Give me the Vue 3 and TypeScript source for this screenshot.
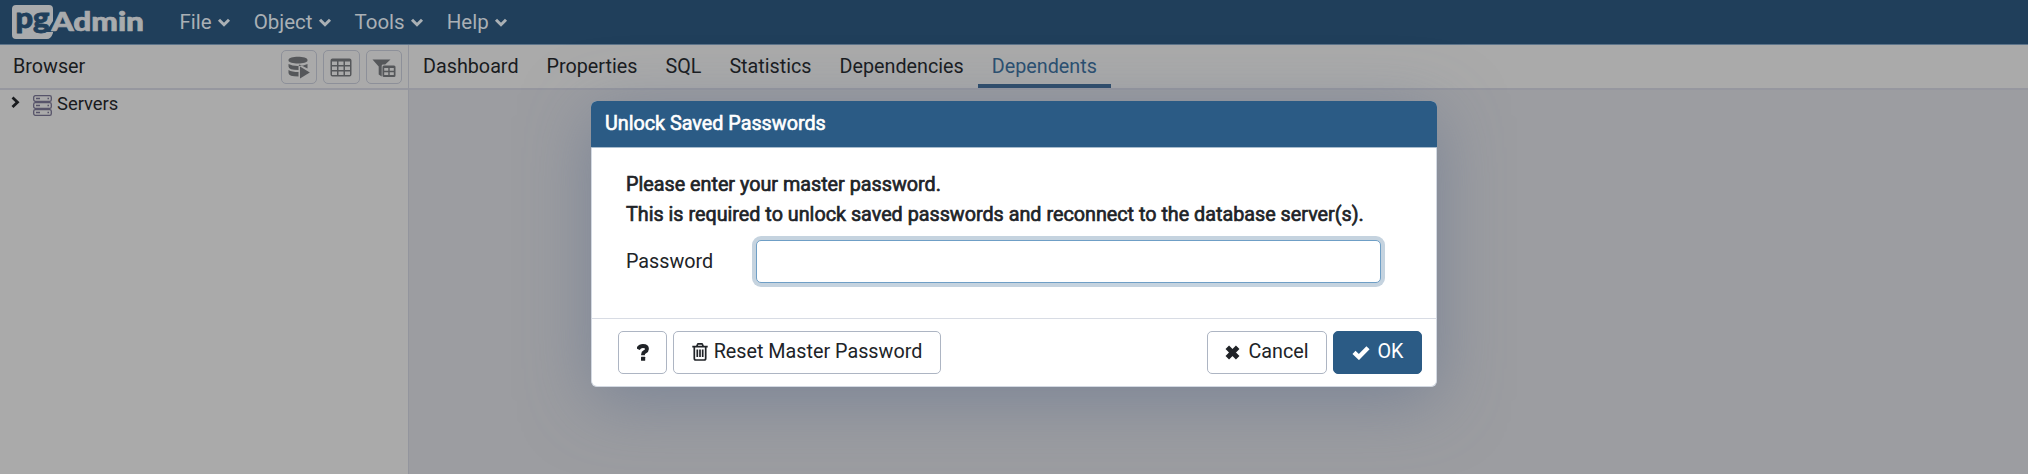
<script setup lang="ts">
const menus: string[] = ['File', 'Object', 'Tools', 'Help']
const tabs: string[] = ['Dashboard', 'Properties', 'SQL', 'Statistics', 'Dependencies', 'Dependents']
const activeTab = 'Dependents'
</script>

<template>
  <div class="app">
    <header class="navbar">
      <svg class="logo" width="138" height="40" viewBox="0 0 138 40">
        <path class="light" d="M6 1H39Q43 1 43 5V17L36 28H43V29Q41 35 37 35H6Q2 35 2 31V5Q2 1 6 1Z" />
        <text class="pg" x="5.500" y="23.500" textLength="34" lengthAdjust="spacingAndGlyphs">pg</text>
        <text class="admin" x="41.500" y="27" textLength="92.500" lengthAdjust="spacingAndGlyphs">Admin</text>
      </svg>
      <nav class="menus">
        <div v-for="menu in menus" :key="menu" class="menu">
          <span>{{ menu }}</span>
          <svg width="14" height="10" viewBox="0 0 14 10"><path d="M2 1.700L7 6.700L12 1.700" /></svg>
        </div>
      </nav>
    </header>

    <div class="workspace">
      <aside class="browser">
        <div class="browser-head">
          <span class="browser-title">Browser</span>
          <div class="tools">
            <div class="tool">
              <svg width="22" height="23" viewBox="0 0 22 23">
                <path d="M.5 4C.5-.2 19.500-.2 19.500 4V4.500C19.500 8.500 .5 8.500 .5 4.500Z" />
                <path d="M.5 8Q4 10 10 10T19.500 8V12.500L11.500 8.500L10.500 10V14Q.5 14 .5 10.500Z" />
                <path d="M.5 14Q4 16 10.500 16V20.500Q.5 20.500 .5 17Z" />
                <path d="M12 10.500L21.800 16.500L12 22.500Z" />
              </svg>
            </div>
            <div class="tool">
              <svg width="22" height="19" viewBox="0 0 22 19">
                <path fill-rule="evenodd" d="M2.500 .5H19.500Q21.500 .5 21.500 2.500V16.500Q21.500 18.500 19.500 18.500H2.500Q.5 18.500 .5 16.500V2.500Q.5 .5 2.500 .5ZM2 3.500V7H7V3.500ZM8.500 3.500V7H13.500V3.500ZM15 3.500V7H20V3.500ZM2 8.500V12H7V8.500ZM8.500 8.500V12H13.500V8.500ZM15 8.500V12H20V8.500ZM2 13.500V17H7V13.500ZM8.500 13.500V17H13.500V13.500ZM15 13.500V17H20V13.500Z" />
              </svg>
            </div>
            <div class="tool">
              <svg class="filter" width="24" height="19" viewBox="0 0 24 19">
                <path d="M.5 .5H18.500L13.200 5.500H10.500L9.700 6.500V17.500L6.700 15.500V7.500Z" />
                <path fill-rule="evenodd" d="M12 6.500H22Q23.500 6.500 23.500 8V16.500Q23.500 18 22 18H12Q10.500 18 10.500 16.500V8Q10.500 6.500 12 6.500ZM12.200 9V11.700H16.300V9ZM17.700 9V11.700H21.800V9ZM12.200 13.200V16H16.300V13.200ZM17.700 13.200V16H21.800V13.200Z" />
              </svg>
            </div>
          </div>
        </div>
        <div class="tree-row">
          <svg class="caret" width="9" height="13" viewBox="0 0 9 13"><path d="M1.500 1.500L6.500 6.200L1.500 11" /></svg>
          <svg class="servers" width="19" height="21" viewBox="0 0 19 21">
            <rect x=".7" y=".7" width="17.600" height="5.600" rx="1.600" />
            <rect x=".7" y="7.700" width="17.600" height="5.600" rx="1.600" />
            <rect x=".7" y="14.700" width="17.600" height="5.600" rx="1.600" />
            <path d="M3 3.500H7M3 10.500H7M3 17.500H7M14.500 3.500H16M14.500 10.500H16M14.500 17.500H16" />
          </svg>
          <span>Servers</span>
        </div>
      </aside>

      <main class="content">
        <div class="tabs">
          <div v-for="tab in tabs" :key="tab" class="tab" :class="{ active: tab === activeTab }">{{ tab }}</div>
        </div>
      </main>
    </div>

    <section class="dialog">
      <div class="dialog-head">Unlock Saved Passwords</div>
      <div class="dialog-body">
        <p class="message">Please enter your master password.<br />This is required to unlock saved passwords and reconnect to the database server(s).</p>
        <div class="field">
          <label for="password">Password</label>
          <input id="password" type="password" />
        </div>
      </div>
      <div class="dialog-foot">
        <button class="btn help">
          <svg width="12" height="17" viewBox="0 0 12 17">
            <path class="hook" d="M1 5.200Q2.500 2 5.900 2Q10 2 10 5Q10 6.700 7.900 7.800Q6 8.800 6 10.500V11.300" />
            <rect x="4" y="12.700" width="4.200" height="4.100" rx=".5" />
          </svg>
        </button>
        <button class="btn reset">
          <svg width="16" height="18" viewBox="0 0 16 18">
            <path class="line" d="M.3 3.700H15.700M4.700 3.500L5.600 1.200Q5.700 .9 6.200 .9H9.800Q10.300 .9 10.400 1.200L11.300 3.500M2.300 4V15.200Q2.300 17 3.800 17H12.200Q13.700 17 13.700 15.200V4M5.300 6.500V14M8 6.500V14M10.700 6.500V14" />
          </svg>
          <span>Reset Master Password</span>
        </button>
        <button class="btn cancel">
          <svg width="15" height="15" viewBox="0 0 15 15"><path class="cross" d="M2.300 2.300L12.700 12.700M12.700 2.300L2.300 12.700" /></svg>
          <span>Cancel</span>
        </button>
        <button class="btn ok">
          <svg width="18" height="15" viewBox="0 0 18 15"><path class="check" d="M2 7.300L6.900 12L16 2.700" /></svg>
          <span>OK</span>
        </button>
      </div>
    </section>
  </div>
</template>

<style>
body {
  margin: 0;
  overflow: hidden;
}
</style>

<style scoped>
* {
  box-sizing: border-box;
}
.app {
  position: relative;
  display: flex;
  flex-direction: column;
  width: 2028px;
  height: 474px;
  overflow: hidden;
  background: #aaa;
  color: #191b1e;
  font: 19.750px/30px Roboto, sans-serif;
}
svg {
  display: block;
  flex: none;
}
.navbar {
  display: flex;
  height: 45px;
  flex: none;
  background: #203f5b;
  border-bottom: 1px solid #5d748a;
  color: #aab0b5;
  font-size: 20.500px;
}
.logo {
  margin: 4px 0 0 10px;
  overflow: visible;
}
.light {
  fill: #a9abad;
}
.pg,
.admin {
  font: 900 29px/30px Lato, sans-serif;
}
.pg {
  fill: #203f5b;
  stroke: #203f5b;
  stroke-width: .8px;
}
.admin {
  fill: #a9abad;
  stroke: #a9abad;
  stroke-width: .7px;
  font-size: 26.500px;
}
.menus {
  display: flex;
  gap: 23px;
  margin: 7px 0 0 31.500px;
}
.menu {
  display: flex;
  gap: 5px;
}
.menu svg {
  margin-top: 11px;
}
.menu path {
  fill: none;
  stroke: #aab0b5;
  stroke-width: 3;
}
.workspace {
  display: flex;
  flex: 1;
}
.browser {
  width: 409px;
  border-right: 1px solid #93959d;
}
.browser-head {
  display: flex;
  justify-content: space-between;
  height: 45px;
  padding: 5px 6px 0 13px;
  border-bottom: 2px solid #96979f;
}
.browser-title {
  margin-top: 2px;
}
.tools {
  display: flex;
  gap: 6px;
}
.tool {
  display: flex;
  align-items: center;
  justify-content: center;
  width: 36.500px;
  height: 34px;
  border: 1px solid #8d9099;
  border-radius: 5px;
}
.tool svg {
  fill: #55575a;
}
.tool .filter {
  margin-top: 3px;
}
.tree-row {
  display: flex;
  height: 30px;
  padding-left: 10.500px;
  font-size: 18.400px;
}
.tree-row span {
  margin-top: -1px;
}
.caret {
  margin-top: 6px;
}
.caret path {
  fill: none;
  stroke: #191b1e;
  stroke-width: 2.800;
}
.servers {
  margin: 5px 5px 0 13.500px;
}
.servers rect,
.servers path {
  fill: none;
  stroke: #57546a;
  stroke-width: 1.300;
}
.content {
  flex: 1;
  background: #9c9da1;
}
.tabs {
  display: flex;
  height: 45px;
  background: #aaa;
  border-bottom: 2px solid #96979f;
}
.tab {
  height: 43px;
  padding: 7px 14px 0;
  border-bottom: 4px solid transparent;
}
.tab.active {
  color: #2b4f70;
  border-bottom-color: #2b4a69;
}
.dialog {
  position: absolute;
  left: 591px;
  top: 101px;
  display: flex;
  flex-direction: column;
  width: 846px;
  height: 286px;
  border: 1px solid #d3d9e2;
  border-top: 0;
  border-radius: 6px;
  background: #fff;
  color: #202327;
  box-shadow: 0 14px 67px rgba(90, 108, 140, .5);
}
.dialog-head {
  height: 47px;
  margin: 0 -1px;
  padding: 8px 14px;
  border-bottom: 1px solid #a9bccd;
  border-radius: 6px 6px 0 0;
  background: #2b5b85;
  color: #fff;
  -webkit-text-stroke: .6px #fff;
}
.dialog-body {
  height: 170px;
  padding: 22px 55px 0 34px;
}
.message {
  margin: 0;
  line-height: 29.500px;
  -webkit-text-stroke: .65px #202327;
  white-space: nowrap;
}
.field {
  display: flex;
  align-items: center;
  justify-content: space-between;
  margin-top: 11px;
}
input {
  width: 625px;
  height: 43px;
  padding: 0 12px;
  border: 1.500px solid #6f9fc6;
  border-radius: 5px;
  outline: none;
  background: #fff;
  box-shadow: 0 0 0 4px #c5d3df;
  font: inherit;
}
.dialog-foot {
  display: flex;
  gap: 6px;
  flex: 1;
  padding: 12px 14px 0 26px;
  border-top: 1px solid #d8dce4;
}
.btn {
  display: flex;
  align-items: center;
  justify-content: center;
  height: 43px;
  padding: 0 0 1px;
  border: 1px solid #adb5c3;
  border-radius: 5px;
  background: #fff;
  color: #202327;
  font: inherit;
}
.btn svg {
  fill: currentColor;
}
.btn path {
  fill: none;
  stroke: currentColor;
}
.btn .hook {
  stroke-width: 3.800;
}
.btn .line {
  stroke-width: 1.700;
}
.btn .cross {
  stroke-width: 5;
}
.btn .check {
  stroke-width: 4.400;
}
.help {
  width: 49px;
}
.reset {
  width: 268px;
  gap: 6px;
}
.cancel {
  width: 120px;
  margin-left: auto;
  gap: 8px;
}
.ok {
  width: 89px;
  gap: 8px;
  background: #2b5b85;
  border-color: #2b5b85;
  color: #fff;
}
</style>
